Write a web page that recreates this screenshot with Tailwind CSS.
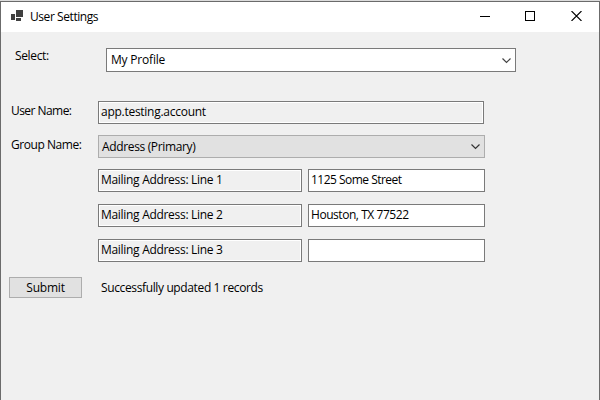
<!DOCTYPE html>
<html lang="en">
<head>
<meta charset="utf-8">
<title>User Settings</title>
<script src="https://cdn.jsdelivr.net/npm/@tailwindcss/browser@4"></script>
</head>
<body class="w-[600px] h-[400px] overflow-hidden bg-[#dcdcdc] pt-px font-['Open_Sans','Noto_Sans',sans-serif] text-[12px] leading-[16px] text-black whitespace-nowrap">
<div class="h-[399px] w-[600px] border-x border-t border-[#6b6b6b] bg-[#f0f0f0] flex flex-col">
  <header class="h-[30px] shrink-0 bg-white flex">
    <div class="flex flex-1 pl-[10px] pt-[7px]">
      <svg class="w-3 h-3 mt-px" viewBox="0 0 12 12" fill="#404040" shape-rendering="crispEdges"><path d="M5 0h7v7H5zM0 4h4v6H0zM5 8h5v3H5z"/></svg>
      <span class="ml-[7px] tracking-[-0.43px]">User Settings</span>
    </div>
    <div class="flex pr-[17px] pt-[9px] gap-[35px]">
      <svg class="w-[10px] h-[10px]" viewBox="0 0 10 10" shape-rendering="crispEdges"><path d="M0 5.5h10" stroke="#000"/></svg>
      <svg class="w-[10px] h-[10px]" viewBox="0 0 10 10" fill="none" shape-rendering="crispEdges"><path d="M.5.5h9v9h-9z" stroke="#000"/></svg>
      <svg class="w-[12px] h-[10px]" viewBox="0 0 12 10" fill="none"><path d="M1.5 0l10 10M11.5 0l-10 10" stroke="#000" stroke-width="1.1"/></svg>
    </div>
  </header>
  <main class="pt-4">
    <div class="flex pl-[14px] h-[24px]">
      <label class="w-[91px] tracking-[-0.35px]">Select:</label>
      <div class="w-[410px] h-[24px] border border-[#7a7a7a] bg-white flex justify-between pl-1 pr-1 pt-[3px]">
        <span class="tracking-[-0.2px]">My Profile</span>
        <svg class="w-[9px] h-[6px] mt-[6px]" viewBox="0 0 9 6" fill="none" stroke="#444" stroke-width="1.2"><path d="M.5.5l4 4 4-4"/></svg>
      </div>
    </div>
    <div class="flex pl-[10px] mt-[29px] h-[23px]">
      <label class="w-[87px] pt-[2px] tracking-[-0.55px]">User Name:</label>
      <div class="w-[386px] border border-[#7a7a7a] bg-[#f0f0f0] shadow-[inset_0_0_0_1px_white] pl-[2px] pt-[2px] tracking-[-0.27px]">app.testing.account</div>
    </div>
    <div class="flex pl-[10px] mt-[11px] h-[23px]">
      <label class="w-[87px] pt-[2px] tracking-[-0.45px]">Group Name:</label>
      <div class="w-[387px] border border-[#adadad] bg-[#e1e1e1] flex justify-between pl-[3px] pr-1 pt-[3px]">
        <span class="tracking-[-0.35px]">Address (Primary)</span>
        <svg class="w-[9px] h-[6px] mt-[5px]" viewBox="0 0 9 6" fill="none" stroke="#333" stroke-width="1.2"><path d="M.5.5l4 4 4-4"/></svg>
      </div>
    </div>
    <div class="ml-[97px] mt-[11px] grid grid-cols-[204px_177px] auto-rows-[23px] gap-x-[6px] gap-y-3 tracking-[-0.3px] *:border *:border-[#7a7a7a] *:pl-[2px] *:pt-[2px]">
      <div class="shadow-[inset_0_0_0_1px_white]">Mailing Address: Line 1</div>
      <div class="bg-white tracking-[-0.52px]">1125 Some Street</div>
      <div class="shadow-[inset_0_0_0_1px_white]">Mailing Address: Line 2</div>
      <div class="bg-white tracking-[-0.45px]">Houston, TX 77522</div>
      <div class="shadow-[inset_0_0_0_1px_white]">Mailing Address: Line 3</div>
      <div class="bg-white"></div>
    </div>
    <div class="flex pl-2 mt-[15px]">
      <button class="w-[73px] h-[21px] border border-[#adadad] bg-[#e1e1e1] leading-[19px] tracking-[-0.2px]">Submit</button>
      <span class="ml-[19px] pt-[3px] tracking-[-0.37px]">Successfully updated 1 records</span>
    </div>
  </main>
</div>
</body>
</html>
